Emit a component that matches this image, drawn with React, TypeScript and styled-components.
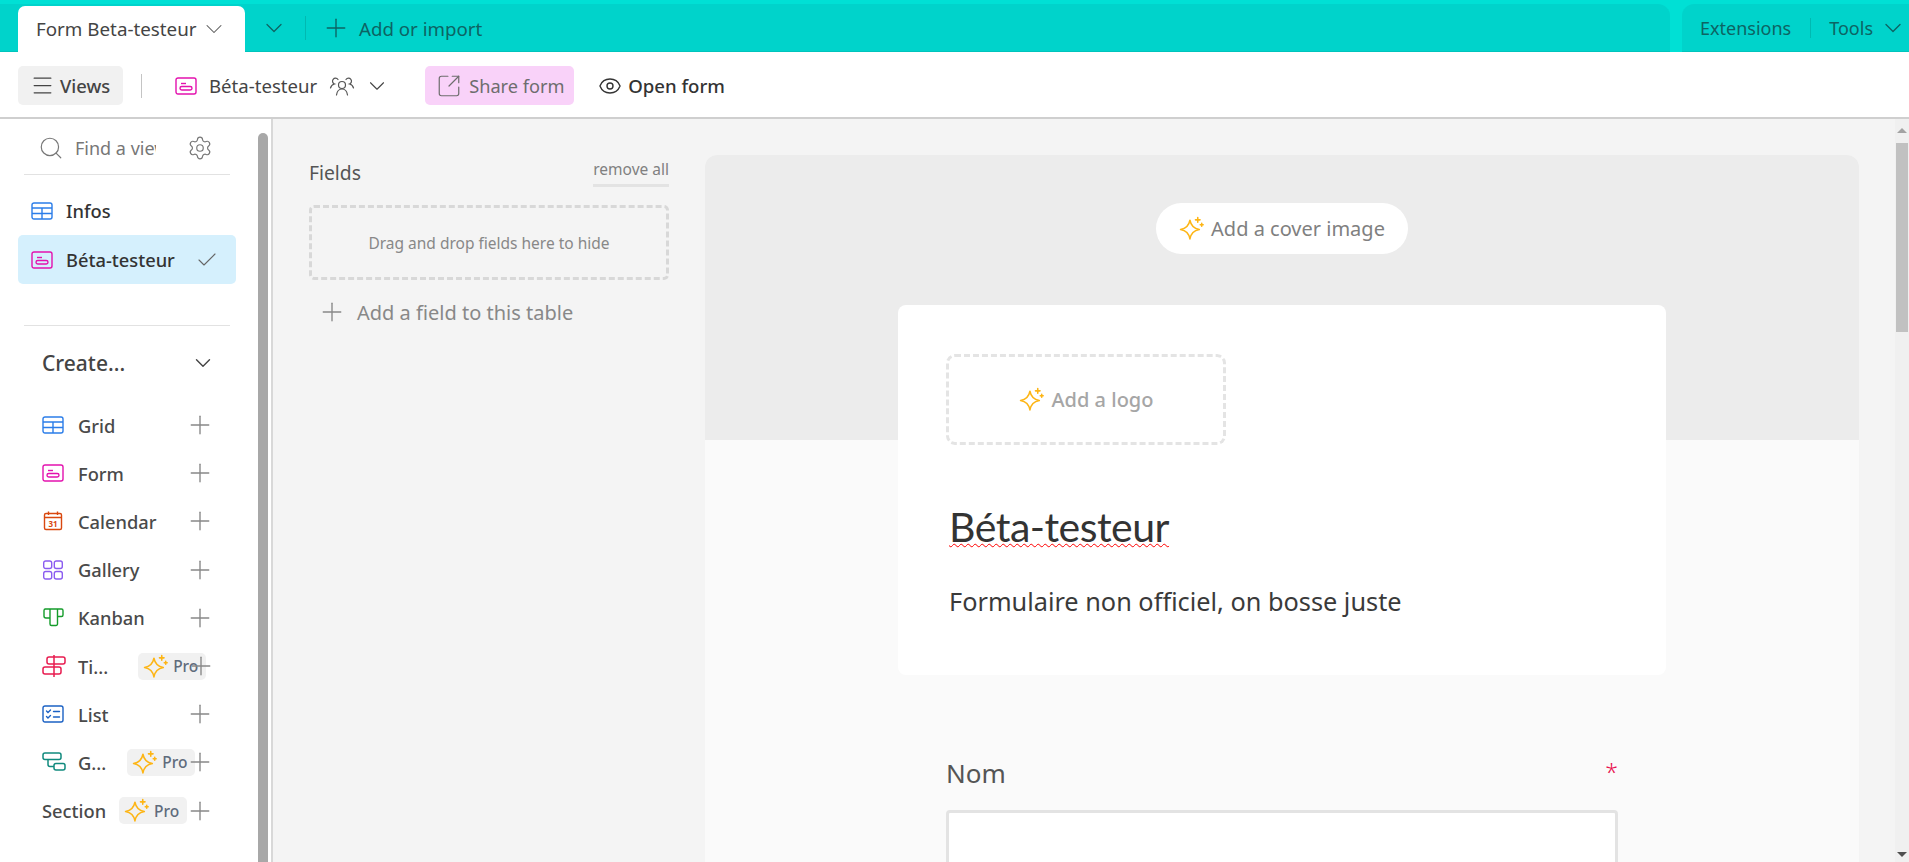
import React from 'react';
import styled, { createGlobalStyle } from 'styled-components';
import { ChevronDown, Plus, Search, Settings, Check, Eye, SquareArrowOutUpRight, Menu } from 'lucide-react';

const GlobalStyle = createGlobalStyle`
  html, body {
    margin: 0;
    height: 100%;
    overflow: hidden;
    background: #fff;
    font-family: "Noto Sans", "Open Sans", sans-serif;
  }
  * { box-sizing: border-box; }
`;

const Page = styled.div`
  height: 862px;
  display: flex;
  flex-direction: column;
  overflow: hidden;
`;

const TopBar = styled.header`
  height: 52px;
  flex: none;
  display: flex;
  align-items: stretch;
  padding: 4px 0 0;
  background: #00e0d5;
`;

const TabStrip = styled.div`
  flex: 1;
  display: flex;
  align-items: center;
  padding-left: 18px;
  background: #00d3cb;
  border-radius: 0 12px 0 0;
  color: #0d6463;
  box-shadow: inset 0 -1px 0 #00c4bc;
`;

const ActiveTab = styled.div`
  width: 227px;
  height: 46px;
  margin-top: 2px;
  align-self: flex-end;
  display: flex;
  align-items: center;
  gap: 3px;
  padding-left: 18px;
  background: #fff;
  border-radius: 7px 7px 0 0;
  color: #444;
  font-size: 18.8px;
  white-space: nowrap;
`;

const TabChevron = styled.span`
  display: flex;
  margin-left: 15px;
  padding-right: 17px;
  border-right: 1px solid #00b9b1;
  height: 24px;
  align-items: center;
`;

const AddImport = styled.div`
  display: flex;
  align-items: center;
  gap: 8px;
  margin-left: 15px;
  font-size: 18.7px;
`;

const ToolsStrip = styled.div`
  width: 227px;
  margin-left: 12px;
  display: flex;
  align-items: center;
  padding-left: 18px;
  background: #00d3cb;
  border-radius: 12px 0 0 0;
  color: #0d6463;
  font-size: 18px;
  box-shadow: inset 0 -1px 0 #00c4bc;
`;

const ToolsSep = styled.span`
  width: 1px;
  height: 20px;
  margin: 0 18px 0 19px;
  background: #00b9b1;
`;

const ToolsChevron = styled.span`
  display: flex;
  margin-left: 6px;
`;

const Toolbar = styled.div`
  height: 67px;
  flex: none;
  display: flex;
  align-items: center;
  padding: 2px 0 0 18px;
  background: #fff;
  border-bottom: 2px solid #cfcfcf;
`;

const ViewsButton = styled.div`
  width: 105px;
  height: 39px;
  display: flex;
  align-items: center;
  gap: 5px;
  padding-left: 12px;
  background: #f1f1f1;
  border-radius: 5px;
  color: #444;
  font-size: 18.4px;
  font-weight: 500;
`;

const ToolbarSep = styled.span`
  width: 1px;
  height: 24px;
  margin: 0 33px 0 18px;
  background: #c4c4c4;
`;

const ViewName = styled.div`
  display: flex;
  align-items: center;
  gap: 12px;
  color: #444;
  font-size: 18.6px;
`;

const ViewChevron = styled.span`
  display: flex;
  margin-left: -3px;
`;

const ShareButton = styled.div`
  width: 149px;
  height: 39px;
  margin-left: 35px;
  display: flex;
  align-items: center;
  gap: 7px;
  padding-left: 11px;
  background: #f9d2f9;
  border-radius: 5px;
  color: #6d6d6d;
  font-size: 18.2px;
`;

const OpenButton = styled.div`
  display: flex;
  align-items: center;
  gap: 6px;
  margin-left: 24px;
  color: #333;
  font-size: 18.6px;
  font-weight: 500;
`;

const Body = styled.div`
  flex: 1;
  min-height: 0;
  display: flex;
`;

const Sidebar = styled.aside`
  width: 273px;
  flex: none;
  display: flex;
  background: #fff;
  border-right: 2px solid #d8d8d8;
`;

const SideContent = styled.nav`
  width: 258px;
  flex: none;
  padding: 0 22px 0 18px;
`;

const SideRail = styled.div`
  width: 10px;
  margin: 14px 0 0;
  height: 740px;
  background: #a8a8a8;
  border-radius: 5px;
`;

const SearchRow = styled.div`
  height: 56px;
  margin: 0 6px;
  display: flex;
  align-items: center;
  padding: 3px 0 0 14px;
  border-bottom: 1px solid #e2e2e2;
  color: #777;
`;

const SearchText = styled.span`
  width: 81px;
  margin: 0 31px 0 11px;
  overflow: hidden;
  white-space: nowrap;
  font-size: 18px;
`;

const ViewList = styled.div`
  padding-top: 11px;
`;

const ViewItem = styled.div<{ $active?: boolean }>`
  width: 218px;
  height: 49px;
  display: flex;
  align-items: center;
  gap: 13px;
  padding-left: 13px;
  background: ${p => (p.$active ? '#d5f0fd' : 'transparent')};
  border-radius: 5px;
  color: #333;
  font-size: 18.3px;
  font-weight: 500;
  white-space: nowrap;
`;

const ItemCheck = styled.span`
  display: flex;
  margin-left: 7px;
  color: #666;
`;

const SideDivider = styled.div`
  height: 1px;
  margin: 41px 6px 0;
  background: #e2e2e2;
`;

const CreateHead = styled.div`
  height: 39px;
  margin-top: 17px;
  display: flex;
  align-items: center;
  padding-left: 24px;
  color: #444;
  font-size: 21px;
  font-weight: 500;
`;

const CreateChevron = styled.span`
  display: flex;
  margin-left: auto;
  margin-right: 20px;
`;

const CreateList = styled.div`
  width: 173px;
  margin: 19px 0 0 24px;
`;

const CreateRow = styled.div`
  height: 48.2px;
  display: flex;
  align-items: center;
  color: #4a4a4a;
  font-size: 18.3px;
  font-weight: 500;
`;

const RowIcon = styled.span`
  width: 36px;
  flex: none;
  display: flex;
`;

const RowPlus = styled.span`
  flex: none;
  display: flex;
  margin-left: auto;
  color: #888;
`;

const ProBadge = styled.span<{ $gap: number; $overlap: number }>`
  width: 68px;
  height: 27px;
  flex: none;
  display: flex;
  align-items: center;
  gap: 5px;
  padding-left: 5px;
  margin-left: ${p => p.$gap}px;
  margin-right: ${p => -p.$overlap}px;
  background: #f1f1f1;
  border-radius: 5px;
  color: #5f6b7c;
  font-size: 15.5px;
  font-weight: 500;
`;

const FieldsPanel = styled.section`
  width: 432px;
  flex: none;
  padding: 39px 36px 0;
  background: #f4f4f4;
`;

const FieldsHead = styled.div`
  display: flex;
  justify-content: space-between;
  align-items: flex-start;
`;

const FieldsTitle = styled.span`
  margin-top: 1px;
  color: #555;
  font-size: 19.3px;
`;

const RemoveAll = styled.span`
  padding-bottom: 4px;
  border-bottom: 3px solid #e3e3e3;
  color: #808080;
  font-size: 15.5px;
`;

const HideZone = styled.div`
  height: 75px;
  margin-top: 18px;
  display: flex;
  align-items: center;
  justify-content: center;
  border: 3px dashed #d8d8d8;
  border-radius: 5px;
  color: #888;
  font-size: 15.5px;
`;

const AddField = styled.div`
  display: flex;
  align-items: center;
  gap: 10px;
  margin-top: 17px;
  padding-left: 8px;
  color: #888;
  font-size: 20px;
`;

const FormArea = styled.main`
  flex: 1;
  min-width: 0;
  padding: 36px 0 0;
  display: flex;
  background: #f4f4f4;
  overflow: hidden;
`;

const FormSheet = styled.div`
  width: 1154px;
  flex: none;
  background: #fafafa;
  border-radius: 12px 12px 0 0;
`;

const CoverBand = styled.div`
  height: 285px;
  display: flex;
  justify-content: center;
  padding-top: 48px;
  background: #ececec;
  border-radius: 12px 12px 0 0;
`;

const CoverButton = styled.div`
  width: 252px;
  height: 51px;
  display: flex;
  align-items: center;
  justify-content: center;
  gap: 7px;
  background: #fff;
  border-radius: 26px;
  color: #808080;
  font-size: 20px;
`;

const FormColumn = styled.div`
  width: 768px;
  margin: -135px auto 0;
`;

const HeadCard = styled.div`
  height: 370px;
  padding: 49px 48px 0;
  background: #fff;
  border-radius: 8px;
`;

const LogoBox = styled.div`
  width: 280px;
  height: 91px;
  display: flex;
  align-items: center;
  justify-content: center;
  gap: 8px;
  border: 3px dashed #e4e4e4;
  border-radius: 9px;
  color: #a6a6a6;
  font-size: 20px;
  font-weight: 500;
`;

const FormTitle = styled.h1`
  display: inline-block;
  margin: 55px 0 0 3px;
  color: #333;
  font-family: Lato, "Noto Sans", sans-serif;
  font-size: 41px;
  line-height: 54px;
  font-weight: 400;
  letter-spacing: -0.5px;
  text-decoration: underline wavy #f00 1px;
  text-underline-offset: 1px;
`;

const FormSubtitle = styled.p`
  margin: 30px 0 0 3px;
  color: #3a3a3a;
  font-size: 25.3px;
  line-height: 34px;
`;

const FieldBlock = styled.div`
  padding: 0 48px;
  margin-top: 80px;
`;

const FieldHead = styled.div`
  display: flex;
  justify-content: space-between;
  color: #555;
  font-size: 26px;
  line-height: 36px;
`;

const Required = styled.span`
  margin-top: 2px;
  color: #e8114f;
  font-size: 23px;
  font-weight: 300;
  line-height: 30px;
`;

const TextField = styled.div`
  height: 56px;
  margin-top: 19px;
  background: #fff;
  border: 3px solid #e3e3e3;
  border-radius: 4px;
`;

const PageScrollbar = styled.div`
  width: 14px;
  margin-left: auto;
  margin-top: -36px;
  height: calc(100% + 36px);
  flex: none;
  display: flex;
  flex-direction: column;
  align-items: center;
  background: #f0f0f0;
`;

const ScrollArrow = styled.span<{ $down?: boolean }>`
  width: 0;
  height: 0;
  margin-top: ${p => (p.$down ? 'auto' : '9px')};
  margin-bottom: ${p => (p.$down ? '5px' : '0')};
  border-left: 5px solid transparent;
  border-right: 5px solid transparent;
  border-bottom: ${p => (p.$down ? '0' : '5px solid #a3a3a3')};
  border-top: ${p => (p.$down ? '5px solid #505050' : '0')};
`;

const ScrollThumb = styled.div`
  width: 12px;
  height: 189px;
  margin-top: 10px;
  background: #c1c1c1;
`;

const Sparkle = () => (
  <svg width="25" height="25" viewBox="0 0 24 24" fill="none" stroke="#fdb515" strokeWidth="1.5" strokeLinejoin="round" strokeLinecap="round">
    <path d="M10.5 4c.9 5 3.2 8 9 9-5.8 1-8.1 4-9 9-.9-5-3.2-8-9-9 5.8-1 8.1-4 9-9z" />
    <path d="M18 1.500v4.500M15.800 3.700h4.400M21.800 7v2.800M20.400 8.400h2.800" />
  </svg>
);

const GridIcon = () => (
  <svg width="22" height="18" viewBox="0 0 22 18" fill="none" stroke="#2b7de9" strokeWidth="1.4">
    <rect x="1" y="1" width="20" height="16" rx="2" />
    <path d="M1 6h20M1 11.5h20M11 6v11" />
  </svg>
);

const FormIcon = () => (
  <svg width="22" height="18" viewBox="0 0 22 18" fill="none" stroke="#e312ae" strokeWidth="1.4">
    <rect x="1" y="1" width="20" height="16" rx="2" />
    <path d="M6 6.5h5" />
    <rect x="5" y="9.5" width="12" height="3.5" rx="1.75" />
  </svg>
);

const CalendarIcon = () => (
  <svg width="22" height="20" viewBox="0 0 22 20" fill="none" stroke="#d9480f" strokeWidth="1.4">
    <rect x="2.5" y="2.5" width="17" height="16" rx="1.5" />
    <path d="M2.5 6.5h17M6.5 0.5v3.5M15.5 0.5v3.5" />
    <text x="11" y="16" fontSize="8" fontWeight="700" fill="#d9480f" stroke="none" textAnchor="middle" fontFamily="Noto Sans">31</text>
  </svg>
);

const GalleryIcon = () => (
  <svg width="22" height="20" viewBox="0 0 22 20" fill="none" stroke="#8b5cf0" strokeWidth="1.4">
    <rect x="1.7" y="1" width="8" height="7.5" rx="2" />
    <rect x="12.3" y="1" width="8" height="7.5" rx="2" />
    <rect x="1.7" y="11.5" width="8" height="7.5" rx="2" />
    <rect x="12.3" y="11.5" width="8" height="7.5" rx="2" />
  </svg>
);

const KanbanIcon = () => (
  <svg width="22" height="20" viewBox="0 0 22 20" fill="none" stroke="#159c2b" strokeWidth="1.4" strokeLinejoin="round">
    <path d="M2.500 1h17A1.500 1.500 0 0 1 21 2.500V7a1.500 1.500 0 0 1-1.500 1.500h-4V1M8 1v9H4a2 2 0 0 1-2-2V2.500A1.500 1.500 0 0 1 3.500 1M8 1h7.500v15a1.500 1.500 0 0 1-1.500 1.500H9.500A1.500 1.500 0 0 1 8 16v-6" />
  </svg>
);

const TimelineIcon = () => (
  <svg width="24" height="24" viewBox="0 0 24 24" fill="none" stroke="#e81b4f" strokeWidth="1.5" strokeLinejoin="round">
    <path d="M12 1v22" />
    <rect x="5" y="3" width="18" height="7" rx="2" />
    <rect x="1" y="13" width="18" height="7" rx="2" />
  </svg>
);

const ListIcon = () => (
  <svg width="22" height="18" viewBox="0 0 22 18" fill="none" stroke="#1b61c4" strokeWidth="1.4" strokeLinecap="round">
    <rect x="1" y="1" width="20" height="16" rx="2" />
    <path d="M4.500 6 6 7.500 8.500 5M4.500 11.500 6 13l2.500-2.500M11.500 6.500h6M11.500 12h6" />
  </svg>
);

const GanttIcon = () => (
  <svg width="24" height="20" viewBox="0 0 24 20" fill="none" stroke="#118a7e" strokeWidth="1.5">
    <rect x="1" y="1" width="18" height="6.5" rx="2" />
    <path d="M6 7.500v5a2 2 0 0 0 2 2h4" />
    <rect x="12" y="11.5" width="11" height="6.5" rx="2" />
  </svg>
);

const PeopleIcon = () => (
  <svg width="26" height="20" viewBox="0 0 26 20" fill="none" stroke="#555" strokeWidth="1.2" strokeLinecap="round">
    <circle cx="13" cy="9" r="3.5" />
    <path d="M7.500 19c.5-3.500 2.500-6 5.500-6s5 2.500 5.500 6" />
    <path d="M9 3.500A3 3 0 1 0 5.500 8C3.500 8.500 2 10 1.500 12" />
    <path d="M17 3.500A3 3 0 1 1 20.500 8C22.500 8.500 24 10 24.500 12" />
  </svg>
);

const CREATE_ROWS = [
  { label: 'Grid', icon: <GridIcon /> },
  { label: 'Form', icon: <FormIcon /> },
  { label: 'Calendar', icon: <CalendarIcon /> },
  { label: 'Gallery', icon: <GalleryIcon /> },
  { label: 'Kanban', icon: <KanbanIcon /> },
  { label: 'Ti...', icon: <TimelineIcon />, pro: { gap: 30, overlap: 20 } },
  { label: 'List', icon: <ListIcon /> },
  { label: 'G...', icon: <GanttIcon />, pro: { gap: 21, overlap: 10 } },
  { label: 'Section', pro: { gap: 13, overlap: 3 } },
];

const App = () => {
  return (
    <Page>
      <GlobalStyle />
      <TopBar>
        <TabStrip>
          <ActiveTab>
            Form Beta-testeur
            <ChevronDown size={28} strokeWidth={0.9} color="#555" />
          </ActiveTab>
          <TabChevron>
            <ChevronDown size={28} strokeWidth={1.1} />
          </TabChevron>
          <AddImport>
            <Plus size={30} strokeWidth={1.1} />
            Add or import
          </AddImport>
        </TabStrip>
        <ToolsStrip>
          Extensions
          <ToolsSep />
          Tools
          <ToolsChevron>
            <ChevronDown size={28} strokeWidth={1.2} />
          </ToolsChevron>
        </ToolsStrip>
      </TopBar>

      <Toolbar>
        <ViewsButton>
          <Menu size={25} strokeWidth={1.2} />
          Views
        </ViewsButton>
        <ToolbarSep />
        <ViewName>
          <FormIcon />
          Béta-testeur
          <PeopleIcon />
          <ViewChevron>
            <ChevronDown size={26} strokeWidth={1} />
          </ViewChevron>
        </ViewName>
        <ShareButton>
          <SquareArrowOutUpRight size={26} strokeWidth={1.1} />
          Share form
        </ShareButton>
        <OpenButton>
          <Eye size={24} strokeWidth={1.4} />
          Open form
        </OpenButton>
      </Toolbar>

      <Body>
        <Sidebar>
          <SideContent>
            <SearchRow>
              <Search size={26} strokeWidth={1.1} />
              <SearchText>Find a view</SearchText>
              <Settings size={26} strokeWidth={1.1} />
            </SearchRow>
            <ViewList>
              <ViewItem>
                <GridIcon />
                Infos
              </ViewItem>
              <ViewItem $active>
                <FormIcon />
                Béta-testeur
                <ItemCheck>
                  <Check size={24} strokeWidth={1.1} />
                </ItemCheck>
              </ViewItem>
            </ViewList>
            <SideDivider />
            <CreateHead>
              Create...
              <CreateChevron>
                <ChevronDown size={26} strokeWidth={1.3} />
              </CreateChevron>
            </CreateHead>
            <CreateList>
              {CREATE_ROWS.map(row => (
                <CreateRow key={row.label}>
                  {row.icon && <RowIcon>{row.icon}</RowIcon>}
                  {row.label}
                  {row.pro && (
                    <ProBadge $gap={row.pro.gap} $overlap={row.pro.overlap}>
                      <Sparkle />
                      Pro
                    </ProBadge>
                  )}
                  <RowPlus>
                    <Plus size={30} strokeWidth={1.1} />
                  </RowPlus>
                </CreateRow>
              ))}
            </CreateList>
          </SideContent>
          <SideRail />
        </Sidebar>

        <FieldsPanel>
          <FieldsHead>
            <FieldsTitle>Fields</FieldsTitle>
            <RemoveAll>remove all</RemoveAll>
          </FieldsHead>
          <HideZone>Drag and drop fields here to hide</HideZone>
          <AddField>
            <Plus size={30} strokeWidth={1.1} />
            Add a field to this table
          </AddField>
        </FieldsPanel>

        <FormArea>
          <FormSheet>
            <CoverBand>
              <CoverButton>
                <Sparkle />
                Add a cover image
              </CoverButton>
            </CoverBand>
            <FormColumn>
              <HeadCard>
                <LogoBox>
                  <Sparkle />
                  Add a logo
                </LogoBox>
                <FormTitle>Béta-testeur</FormTitle>
                <FormSubtitle>Formulaire non officiel, on bosse juste</FormSubtitle>
              </HeadCard>
              <FieldBlock>
                <FieldHead>
                  Nom
                  <Required>*</Required>
                </FieldHead>
                <TextField />
              </FieldBlock>
            </FormColumn>
          </FormSheet>
          <PageScrollbar>
            <ScrollArrow />
            <ScrollThumb />
            <ScrollArrow $down />
          </PageScrollbar>
        </FormArea>
      </Body>
    </Page>
  );
};

export default App;
